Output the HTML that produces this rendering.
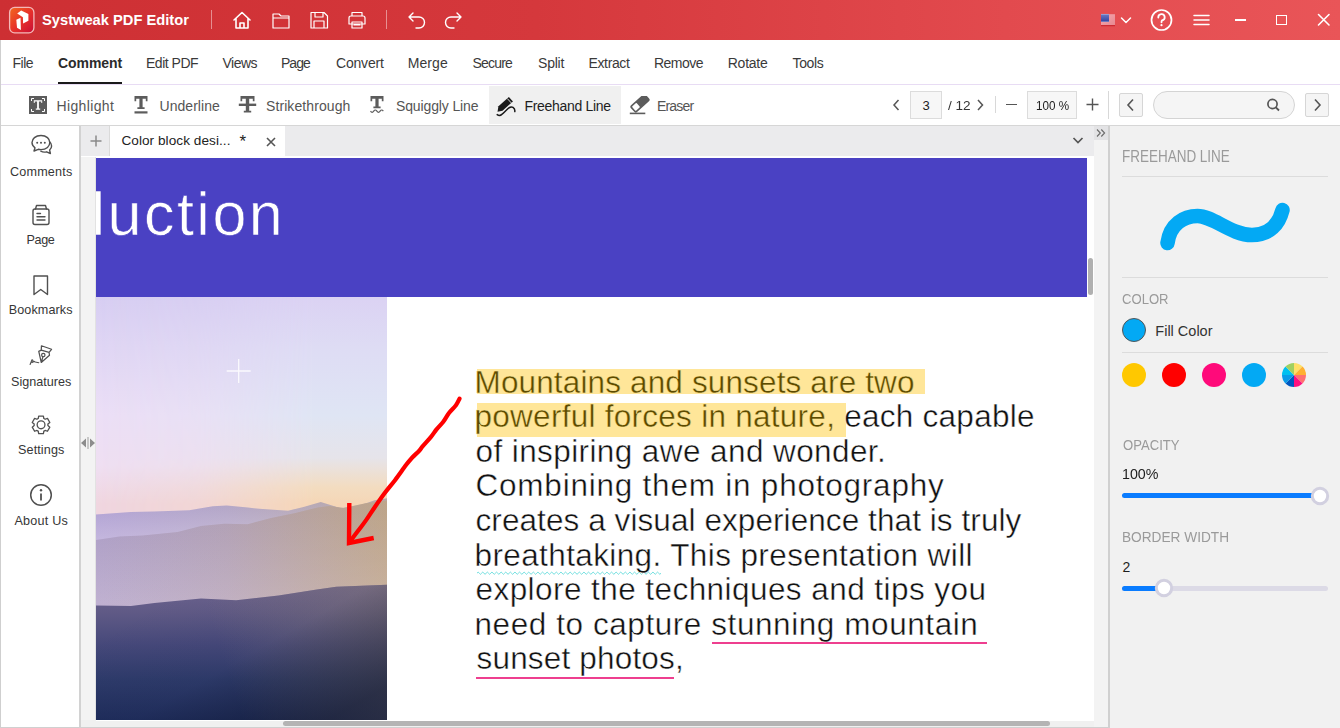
<!DOCTYPE html><html><head><meta charset="utf-8"><style>
html,body{margin:0;padding:0;}
body{width:1340px;height:728px;overflow:hidden;position:relative;background:#fff;font-family:"Liberation Sans",sans-serif;}
.t{position:absolute;white-space:pre;}
.r{position:absolute;display:block;}
</style></head><body>
<div class="r" style="left:0px;top:0px;width:1340px;height:40px;background:linear-gradient(90deg,#cd2f33 0%,#d5383c 40%,#e24a4e 75%,#e95558 100%);"></div>
<svg class="r" style="left:8px;top:6px;" width="28" height="28" viewBox="0 0 28 28"><defs><linearGradient id="lg" x1="0" y1="0" x2="1" y2="1"><stop offset="0" stop-color="#f26a1e"/><stop offset="0.5" stop-color="#e8322a"/><stop offset="1" stop-color="#c80c36"/></linearGradient></defs>
<rect x="1.6" y="1.4" width="24.3" height="25.4" rx="5" fill="url(#lg)" stroke="#f4b8b8" stroke-width="1.3"/>
<path d="M9.2 7.45 L13.16 4.6 L20.4 7.9 L20.4 14.7 L15.1 17.6 L14.9 11.2 Z" fill="#fff"/>
<path d="M8.3 13.8 L12.5 11.85 L12.9 23.9 L9 21.7 Z" fill="#fff"/></svg>
<div class="t" style="left:42.00px;top:13.25px;font-size:14.7px;line-height:14.7px;color:#fff;font-weight:700;">Systweak PDF Editor</div>
<div class="r" style="left:211px;top:10px;width:1px;height:19px;background:rgba(255,255,255,0.45);"></div>
<div class="r" style="left:386px;top:10px;width:1px;height:19px;background:rgba(255,255,255,0.45);"></div>
<svg class="r" style="left:231px;top:10px;" width="22" height="20" viewBox="0 0 22 20"><path stroke="#fff" fill="none" stroke-linejoin="round" stroke-linecap="round" stroke-width="1.6" d="M3 10 L11 2.5 L19 10 M5 8.5 V18 H17 V8.5 M9 18 V13 H13 V18"/></svg>
<svg class="r" style="left:270px;top:10px;" width="22" height="20" viewBox="0 0 22 20"><path stroke="#fff" fill="none" stroke-linejoin="round" stroke-linecap="round" stroke-width="1.2" d="M3 4 H9 L11 6 H19 V18 H3 Z M3 8 H19"/></svg>
<svg class="r" style="left:308px;top:10px;" width="22" height="20" viewBox="0 0 22 20"><path stroke="#fff" fill="none" stroke-linejoin="round" stroke-linecap="round" stroke-width="1.2" d="M3 2.5 H16 L19.5 6 V18 H3 Z M7 2.5 V7 H15 V2.5 M6 18 V11 H16 V18"/></svg>
<svg class="r" style="left:346px;top:10px;" width="22" height="20" viewBox="0 0 22 20"><path stroke="#fff" fill="none" stroke-linejoin="round" stroke-linecap="round" stroke-width="1.2" d="M6 6 V2.5 H16 V6 M3 8 Q3 6 5 6 H17 Q19 6 19 8 V14 H3 Z M6 12 H16 V18 H6 Z M8 15 H14"/></svg>
<svg class="r" style="left:405px;top:10px;" width="22" height="20" viewBox="0 0 22 20"><path stroke="#fff" fill="none" stroke-linejoin="round" stroke-linecap="round" stroke-width="1.4" d="M4 7 H14 A5.5 5.5 0 0 1 14 18 H11 M8 3 L4 7 L8 11"/></svg>
<svg class="r" style="left:443px;top:10px;" width="22" height="20" viewBox="0 0 22 20"><path stroke="#fff" fill="none" stroke-linejoin="round" stroke-linecap="round" stroke-width="1.4" d="M18 7 H8 A5.5 5.5 0 0 0 8 18 H11 M14 3 L18 7 L14 11"/></svg>
<svg class="r" style="left:1100px;top:13px;" width="16" height="14" viewBox="0 0 16 14"><defs><linearGradient id="fc" x1="0" y1="0" x2="0" y2="1"><stop offset="0" stop-color="#6e7cc4"/><stop offset="1" stop-color="#3040a0"/></linearGradient><linearGradient id="fs" x1="0" y1="0" x2="1" y2="1"><stop offset="0" stop-color="#f4a8b0"/><stop offset="1" stop-color="#e88890"/></linearGradient></defs><rect x="1" y="1.2" width="14" height="11" fill="url(#fs)"/><rect x="1" y="1" width="8" height="8" fill="url(#fc)"/><path d="M1.5 1.4 H8.5 M1.5 8.6 H8.5" stroke="#e8ecff" stroke-width="0.7" stroke-dasharray="1 1"/><rect x="1" y="12.2" width="14" height="1" fill="#c8202a"/></svg>
<svg class="r" style="left:1119px;top:15px;" width="14" height="10" viewBox="0 0 14 10"><path stroke="#fff" fill="none" stroke-linejoin="round" stroke-linecap="round" stroke-width="1.5" d="M2.5 3 L7 7.5 L11.5 3"/></svg>
<svg class="r" style="left:1149px;top:8px;" width="26" height="24" viewBox="0 0 26 24"><circle cx="12.5" cy="12" r="10" stroke="#fff" fill="none" stroke-linejoin="round" stroke-linecap="round" stroke-width="1.7"/><path stroke="#fff" fill="none" stroke-linejoin="round" stroke-linecap="round" stroke-width="1.8" d="M9.3 9.5 A3.2 3.2 0 1 1 13 12.5 Q12.5 13 12.5 14.3"/><circle cx="12.5" cy="17.2" r="1.1" fill="#fff"/></svg>
<svg class="r" style="left:1192px;top:13px;" width="20" height="14" viewBox="0 0 20 14"><path stroke="#fff" fill="none" stroke-linejoin="round" stroke-linecap="round" stroke-width="1.5" d="M2 2.5 H17 M2 7 H17 M2 11.5 H17"/></svg>
<div class="r" style="left:1235px;top:19px;width:11px;height:2px;background:#fff;"></div>
<div class="r" style="left:1276px;top:15px;width:11px;height:10px;background:transparent;border:1.8px solid #fff;box-sizing:border-box;"></div>
<svg class="r" style="left:1316px;top:13px;" width="16" height="14" viewBox="0 0 16 14"><path stroke="#fff" fill="none" stroke-linejoin="round" stroke-linecap="round" stroke-width="1.6" d="M2.5 1.5 L13 12 M13 1.5 L2.5 12"/></svg>
<div class="r" style="left:0px;top:40px;width:1px;height:688px;background:#cfcfcf;"></div>
<div class="r" style="left:1px;top:84px;width:1339px;height:1px;background:#e8dcf4;"></div>
<div class="t" style="left:12.50px;top:56.15px;font-size:14px;line-height:14px;color:#3a3a3a;font-weight:400;letter-spacing:-0.507px;">File</div>
<div class="t" style="left:58.00px;top:56.15px;font-size:14px;line-height:14px;color:#2b2b2b;font-weight:700;letter-spacing:-0.066px;">Comment</div>
<div class="t" style="left:146.00px;top:56.15px;font-size:14px;line-height:14px;color:#3a3a3a;font-weight:400;letter-spacing:-0.495px;">Edit PDF</div>
<div class="t" style="left:222.50px;top:56.15px;font-size:14px;line-height:14px;color:#3a3a3a;font-weight:400;letter-spacing:-0.523px;">Views</div>
<div class="t" style="left:281.00px;top:56.15px;font-size:14px;line-height:14px;color:#3a3a3a;font-weight:400;letter-spacing:-0.970px;">Page</div>
<div class="t" style="left:336.00px;top:56.15px;font-size:14px;line-height:14px;color:#3a3a3a;font-weight:400;letter-spacing:-0.188px;">Convert</div>
<div class="t" style="left:407.75px;top:56.15px;font-size:14px;line-height:14px;color:#3a3a3a;font-weight:400;letter-spacing:0.088px;">Merge</div>
<div class="t" style="left:472.50px;top:56.15px;font-size:14px;line-height:14px;color:#3a3a3a;font-weight:400;letter-spacing:-0.814px;">Secure</div>
<div class="t" style="left:538.00px;top:56.15px;font-size:14px;line-height:14px;color:#3a3a3a;font-weight:400;letter-spacing:-0.211px;">Split</div>
<div class="t" style="left:588.50px;top:56.15px;font-size:14px;line-height:14px;color:#3a3a3a;font-weight:400;letter-spacing:-0.363px;">Extract</div>
<div class="t" style="left:654.00px;top:56.15px;font-size:14px;line-height:14px;color:#3a3a3a;font-weight:400;letter-spacing:-0.519px;">Remove</div>
<div class="t" style="left:727.75px;top:56.15px;font-size:14px;line-height:14px;color:#3a3a3a;font-weight:400;letter-spacing:-0.242px;">Rotate</div>
<div class="t" style="left:792.50px;top:56.15px;font-size:14px;line-height:14px;color:#3a3a3a;font-weight:400;letter-spacing:-0.358px;">Tools</div>
<div class="r" style="left:58px;top:82px;width:64px;height:2px;background:#1a1a1a;"></div>
<div class="r" style="left:1px;top:125px;width:1339px;height:1px;background:#d6d6d6;"></div>
<div class="r" style="left:489px;top:86px;width:132px;height:38px;background:#f0f0f0;"></div>
<svg class="r" style="left:29px;top:96px;" width="18" height="18" viewBox="0 0 18 18"><rect x="0" y="0" width="18" height="18" fill="#5c5c5c"/><path d="M2.5 5 V2.5 H5 M13 2.5 H15.5 V5 M15.5 13 V15.5 H13 M5 15.5 H2.5 V13" stroke="#fff" stroke-width="1" fill="none"/><path d="M4.8 4.3 H13.2 V7 H12.3 V5.6 H9.9 V12.6 H11.2 V13.7 H6.8 V12.6 H8.1 V5.6 H5.7 V7 H4.8 Z" fill="#fff"/></svg>
<svg class="r" style="left:133px;top:95px;" width="16" height="20" viewBox="0 0 16 20"><path d="M1.5 1 H14.5 V6.3 H12.8 V3.8 H9.6 V12.2 H11.6 V14 H4.4 V12.2 H6.4 V3.8 H3.2 V6.3 H1.5 Z" fill="#5c5c5c"/><rect x="1.5" y="16.3" width="13" height="2.2" fill="#5c5c5c"/></svg>
<svg class="r" style="left:238px;top:95px;" width="19" height="20" viewBox="0 0 19 20"><path d="M2.5 1 H16.5 V6.3 H14.8 V3.8 H11.2 V15.7 H13.2 V17.6 H5.8 V15.7 H7.8 V3.8 H4.2 V6.3 H2.5 Z" fill="#5c5c5c"/><rect x="0.8" y="8.6" width="17.4" height="2.4" fill="#5c5c5c"/></svg>
<svg class="r" style="left:369px;top:95px;" width="16" height="20" viewBox="0 0 16 20"><path d="M1.5 1 H14.5 V6.3 H12.8 V3.8 H9.6 V11.5 H11.6 V13.3 H4.4 V11.5 H6.4 V3.8 H3.2 V6.3 H1.5 Z" fill="#5c5c5c"/><path d="M1.5 16.2 q1.6 2.4 3.2 0 t3.2 0 t3.2 0 t3.2 0" stroke="#5c5c5c" stroke-width="1.2" fill="none"/></svg>
<svg class="r" style="left:495px;top:95.5px;" width="22" height="22" viewBox="0 0 22 22"><path d="M2.5 15.8 L3.46 10.3 L13.86 1.0 L17.94 5.4 L7.54 14.7 Z" fill="#1a1a1a"/><path d="M12.3 2.6 L16.4 7" stroke="#f0f0f0" stroke-width="0.9"/><path d="M2.2 18.6 Q5 20.8 8.5 17 L12.3 13.2 Q15.8 9.8 18 11.4 Q20.2 13 19.8 15.6" stroke="#1a1a1a" stroke-width="1.5" fill="none" stroke-linecap="round"/></svg>
<svg class="r" style="left:629px;top:95.5px;" width="22" height="22" viewBox="0 0 22 22"><g transform="translate(0.5 -2.2) rotate(-42 10.5 9.5)"><rect x="0.5" y="5" width="20" height="9" rx="2" fill="#5c5c5c"/><rect x="2.1" y="6.6" width="6" height="5.8" rx="0.8" fill="#fff"/></g><rect x="0.8" y="16.6" width="15.5" height="1.6" fill="#5c5c5c"/></svg>
<div class="t" style="left:56.50px;top:99.40px;font-size:14px;line-height:14px;color:#555;font-weight:400;letter-spacing:0.364px;">Highlight</div>
<div class="t" style="left:159.50px;top:99.40px;font-size:14px;line-height:14px;color:#555;font-weight:400;letter-spacing:0.045px;">Underline</div>
<div class="t" style="left:266.00px;top:99.40px;font-size:14px;line-height:14px;color:#555;font-weight:400;letter-spacing:0.085px;">Strikethrough</div>
<div class="t" style="left:396.00px;top:99.40px;font-size:14px;line-height:14px;color:#555;font-weight:400;letter-spacing:-0.127px;">Squiggly Line</div>
<div class="t" style="left:524.50px;top:99.40px;font-size:14px;line-height:14px;color:#1e1e1e;font-weight:400;letter-spacing:-0.313px;">Freehand Line</div>
<div class="t" style="left:657.00px;top:99.40px;font-size:14px;line-height:14px;color:#555;font-weight:400;letter-spacing:-0.814px;">Eraser</div>
<svg class="r" style="left:890px;top:97px;" width="12" height="16" viewBox="0 0 12 16"><path d="M8.5 3 L4 8 L8.5 13" stroke="#555" stroke-width="1.5" fill="none"/></svg>
<div class="r" style="left:910px;top:91px;width:32px;height:28px;background:#f7f7f7;border:1px solid #dcdcdc;box-sizing:border-box;"></div>
<div class="t" style="left:922.50px;top:99.49px;font-size:13px;line-height:13px;color:#222;font-weight:400;">3</div>
<div class="t" style="left:947.50px;top:99.49px;font-size:13px;line-height:13px;color:#333;font-weight:400;transform:scaleX(1.0441);transform-origin:0 0;">/ 12</div>
<svg class="r" style="left:974px;top:97px;" width="12" height="16" viewBox="0 0 12 16"><path d="M4 3 L8.5 8 L4 13" stroke="#555" stroke-width="1.5" fill="none"/></svg>
<div class="r" style="left:995px;top:96px;width:1px;height:17px;background:#d8d8d8;"></div>
<div class="r" style="left:1006px;top:104px;width:11px;height:1.4px;background:#555;"></div>
<div class="r" style="left:1027px;top:91px;width:50px;height:28px;background:#f7f7f7;border:1px solid #dcdcdc;box-sizing:border-box;"></div>
<div class="t" style="left:1035.50px;top:99.49px;font-size:13px;line-height:13px;color:#222;font-weight:400;transform:scaleX(0.8981);transform-origin:0 0;">100 %</div>
<svg class="r" style="left:1085px;top:97px;" width="15" height="15" viewBox="0 0 15 15"><path d="M1.5 7.5 H13.5 M7.5 1.5 V13.5" stroke="#555" stroke-width="1.4" fill="none"/></svg>
<div class="r" style="left:1108px;top:91px;width:1px;height:28px;background:#d8d8d8;"></div>
<div class="r" style="left:1119px;top:93px;width:24px;height:24px;background:#f5f5f5;border:1px solid #d6d6d6;box-sizing:border-box;border-radius:2px;"></div>
<svg class="r" style="left:1119px;top:93px;" width="24" height="24" viewBox="0 0 24 24"><path d="M14 6.5 L9 12 L14 17.5" stroke="#555" stroke-width="1.6" fill="none"/></svg>
<div class="r" style="left:1153px;top:91px;width:142px;height:28px;background:#f5f5f5;border:1px solid #d4d4d4;box-sizing:border-box;border-radius:14px;"></div>
<svg class="r" style="left:1265px;top:96px;" width="18" height="18" viewBox="0 0 18 18"><circle cx="7.5" cy="8" r="4.6" stroke="#555" stroke-width="1.7" fill="none"/><path d="M10.8 11.3 L14 14.5" stroke="#555" stroke-width="1.9"/></svg>
<div class="r" style="left:1305px;top:93px;width:24px;height:24px;background:#f5f5f5;border:1px solid #d6d6d6;box-sizing:border-box;border-radius:2px;"></div>
<svg class="r" style="left:1305px;top:93px;" width="24" height="24" viewBox="0 0 24 24"><path d="M10 6.5 L15 12 L10 17.5" stroke="#555" stroke-width="1.6" fill="none"/></svg>
<div class="r" style="left:79px;top:126px;width:2px;height:602px;background:#d2d2d2;"></div>
<svg class="r" style="left:30px;top:133px;" width="23" height="24" viewBox="0 0 23 24"><path stroke="#505050" fill="none" stroke-linejoin="round" stroke-linecap="round" stroke-width="1.4" d="M11 2.5 C5.5 2.5 2 5.8 2 9.6 C2 11.8 3.2 13.6 5 14.8 L4 18 L8.3 16.3 C9.2 16.5 10.1 16.6 11 16.6 C16.5 16.6 19.8 13.3 19.8 9.6 C19.8 5.8 16.5 2.5 11 2.5 Z"/><path stroke="#505050" fill="none" stroke-linejoin="round" stroke-linecap="round" stroke-width="1.4" d="M19.6 8.8 C21 10 21.6 11.4 21.6 13 C21.6 14.6 20.8 16 19.6 17 L20.4 20.5 L16.6 18.8 C14.8 19.3 12.6 19.2 10.8 18.2"/><circle cx="7.2" cy="9.7" r="1" fill="#505050"/><circle cx="11" cy="9.7" r="1" fill="#505050"/><circle cx="14.8" cy="9.7" r="1" fill="#505050"/></svg>
<svg class="r" style="left:31px;top:203px;" width="20" height="24" viewBox="0 0 20 24"><rect x="2" y="6" width="16" height="15.5" rx="2" stroke="#505050" fill="none" stroke-linejoin="round" stroke-linecap="round" stroke-width="1.4"/><path stroke="#505050" fill="none" stroke-linejoin="round" stroke-linecap="round" stroke-width="1.4" d="M4.5 6 L5.5 2.5 H14.5 L15.5 6"/><path stroke="#505050" fill="none" stroke-linejoin="round" stroke-linecap="round" stroke-width="1.4" d="M6 10.5 H9.5 M6 13.8 H14 M6 17 H14"/></svg>
<svg class="r" style="left:32px;top:274px;" width="18" height="23" viewBox="0 0 18 23"><path stroke="#505050" fill="none" stroke-linejoin="round" stroke-linecap="round" stroke-width="1.4" d="M2 2 H15.5 V20.5 L8.75 15.5 L2 20.5 Z" stroke-width="1.5"/></svg>
<svg class="r" style="left:29px;top:344px;" width="24" height="22" viewBox="0 0 24 22"><path stroke="#505050" fill="none" stroke-linejoin="round" stroke-linecap="round" stroke-width="1.25" d="M12.45 1.77 L22.55 5.27 L20.07 8.36 L12.25 6.1 Z M12.25 6.1 L9.77 7.33 L12.25 18.46 L20.49 11.25 L20.07 8.36 M13.9 12.9 L12.25 18.3"/><circle cx="14.3" cy="11.04" r="1.7" stroke="#505050" fill="none" stroke-linejoin="round" stroke-linecap="round" stroke-width="1.2"/><path stroke="#505050" fill="none" stroke-linejoin="round" stroke-linecap="round" stroke-width="1.1" d="M1.1 20.5 L3 15.8 Q4.5 16 3.8 17.6 L3 18.6 L5.2 17.4 L6.3 18 L9.8 18.7"/></svg>
<svg class="r" style="left:30px;top:414px;" width="22" height="22" viewBox="0 0 22 22"><path stroke="#505050" fill="none" stroke-linejoin="round" stroke-linecap="round" stroke-width="1.3" d="M8.23 4.53 L8.68 2.04 L13.40 2.04 L13.85 4.53 A6.9 6.9 0 0 1 15.10 5.25 L15.10 5.25 L17.47 4.40 L19.83 8.47 L17.90 10.11 A6.9 6.9 0 0 1 17.90 11.55 L17.90 11.55 L19.83 13.19 L17.47 17.26 L15.10 16.41 A6.9 6.9 0 0 1 13.85 17.13 L13.85 17.13 L13.40 19.62 L8.68 19.62 L8.23 17.13 A6.9 6.9 0 0 1 6.98 16.41 L6.98 16.41 L4.61 17.26 L2.25 13.19 L4.18 11.55 A6.9 6.9 0 0 1 4.18 10.11 L4.18 10.11 L2.25 8.47 L4.61 4.40 L6.98 5.25 A6.9 6.9 0 0 1 8.23 4.53 Z"/><circle cx="11.04" cy="10.83" r="3.9" stroke="#505050" fill="none" stroke-linejoin="round" stroke-linecap="round" stroke-width="1.3"/></svg>
<svg class="r" style="left:29px;top:483px;" width="24" height="24" viewBox="0 0 24 24"><circle cx="12" cy="12" r="10.3" stroke="#505050" fill="none" stroke-linejoin="round" stroke-linecap="round" stroke-width="1.5"/><path d="M12 10.5 V17.5" stroke="#505050" stroke-width="1.8"/><circle cx="12" cy="7.2" r="1.2" fill="#505050"/></svg>
<div class="t" style="left:10.00px;top:166.13px;font-size:12.6px;line-height:12.6px;color:#363636;font-weight:400;letter-spacing:0.188px;">Comments</div>
<div class="t" style="left:26.50px;top:233.88px;font-size:12.6px;line-height:12.6px;color:#363636;font-weight:400;letter-spacing:-0.386px;">Page</div>
<div class="t" style="left:8.75px;top:303.63px;font-size:12.6px;line-height:12.6px;color:#363636;font-weight:400;letter-spacing:0.101px;">Bookmarks</div>
<div class="t" style="left:11.00px;top:375.73px;font-size:12.6px;line-height:12.6px;color:#363636;font-weight:400;letter-spacing:0.010px;">Signatures</div>
<div class="t" style="left:18.00px;top:443.63px;font-size:12.6px;line-height:12.6px;color:#363636;font-weight:400;letter-spacing:0.113px;">Settings</div>
<div class="t" style="left:14.40px;top:514.88px;font-size:12.6px;line-height:12.6px;color:#363636;font-weight:400;letter-spacing:0.228px;">About Us</div>
<div class="r" style="left:81px;top:126px;width:1013px;height:30px;background:#ebebed;"></div>
<div class="r" style="left:109px;top:126px;width:1px;height:30px;background:#dadada;"></div>
<div class="r" style="left:110px;top:126px;width:175px;height:30px;background:#fff;"></div>
<svg class="r" style="left:88px;top:133px;" width="16" height="16" viewBox="0 0 16 16"><path d="M8 2.5 V13.5 M2.5 8 H13.5" stroke="#8a8a8a" stroke-width="1.5" fill="none"/></svg>
<div class="t" style="left:121.40px;top:134.48px;font-size:13.6px;line-height:13.6px;color:#222;font-weight:400;letter-spacing:0.058px;">Color block desi...</div>
<div class="t" style="left:239.50px;top:133.11px;font-size:17px;line-height:17px;color:#222;font-weight:400;">*</div>
<svg class="r" style="left:264px;top:135px;" width="14" height="14" viewBox="0 0 14 14"><path d="M3 3 L11 11 M11 3 L3 11" stroke="#555" stroke-width="1.6" fill="none"/></svg>
<svg class="r" style="left:1070px;top:133px;" width="16" height="14" viewBox="0 0 16 14"><path d="M3.5 5 L8 9.5 L12.5 5" stroke="#555" stroke-width="1.7" fill="none"/></svg>
<div class="r" style="left:81px;top:156px;width:1013px;height:1px;background:#ffffff;"></div>
<div class="r" style="left:1094px;top:126px;width:14px;height:14px;background:#e3e3e5;"></div>
<svg class="r" style="left:1094px;top:126px;" width="14" height="14" viewBox="0 0 14 14"><path d="M3 3.5 L6.3 7 L3 10.5 M7.3 3.5 L10.6 7 L7.3 10.5" stroke="#6a6a6a" stroke-width="1.1" fill="none"/></svg>
<div class="r" style="left:81px;top:157px;width:14px;height:563px;background:#f3f3f3;"></div>
<div class="r" style="left:95px;top:157px;width:1px;height:563px;background:#e2e2e2;"></div>
<div class="r" style="left:96px;top:157px;width:998px;height:563px;background:#ffffff;"></div>
<div class="r" style="left:1094px;top:140px;width:14px;height:588px;background:#f3f3f3;"></div>
<div class="r" style="left:1108px;top:126px;width:2px;height:602px;background:#d0d0d0;"></div>
<div class="r" style="left:96px;top:158px;width:991px;height:139px;background:#4a41c3;"></div>
<div class="r" style="left:96px;top:158px;width:991px;height:139px;overflow:hidden;">
<div class="t" style="left:-4.50px;top:25.85px;font-size:61px;line-height:61px;color:#fff;font-weight:400;letter-spacing:2.483px;-webkit-text-stroke:0.6px #4a41c3;">luction</div>
</div>
<div class="r" style="left:1088px;top:258px;width:5px;height:37px;background:#b0b0b0;border-radius:3px;"></div>
<svg class="r" style="left:80px;top:436px;" width="16" height="14" viewBox="0 0 16 14"><path d="M6 2.5 V11.5 L1 7 Z" fill="#8c8c8c"/><rect x="7" y="1" width="2" height="12" fill="#c8c8c8"/><path d="M10 2.5 V11.5 L15 7 Z" fill="#8c8c8c"/></svg>
<div class="r" style="left:81px;top:720px;width:1013px;height:7px;background:#f0f0f0;"></div>
<div class="r" style="left:96px;top:720px;width:998px;height:1px;background:#fff;"></div>
<div class="r" style="left:283px;top:721px;width:767px;height:5px;background:#b4b4b4;border-radius:3px;"></div>
<div class="r" style="left:0px;top:727px;width:1110px;height:1px;background:#d0d0d0;"></div>
<div class="r" style="left:1110px;top:126px;width:230px;height:602px;background:#f1f1f1;"></div>
<div class="t" style="left:1121.54px;top:148.79px;font-size:15.6px;line-height:15.6px;color:#9a9a9a;font-weight:400;transform:scaleX(0.8641);transform-origin:0 0;">FREEHAND LINE</div>
<div class="r" style="left:1122px;top:176px;width:206px;height:1px;background:#dcdcdc;"></div>
<svg class="r" style="left:1110px;top:176px;" width="230" height="100" viewBox="0 0 230 100"><path d="M57.5 67 C60 48 74 40 87.5 40 C103 40 121 59 142 59 C160 59 169 48 172.5 34" stroke="#03a9f4" stroke-width="14.5" fill="none" stroke-linecap="round"/></svg>
<div class="r" style="left:1122px;top:277px;width:206px;height:1px;background:#dcdcdc;"></div>
<div class="t" style="left:1122.00px;top:291.30px;font-size:15px;line-height:15px;color:#9a9a9a;font-weight:400;transform:scaleX(0.8727);transform-origin:0 0;">COLOR</div>
<svg class="r" style="left:1121px;top:317px;" width="26" height="26" viewBox="0 0 26 26"><circle cx="13" cy="13" r="11.5" fill="#03a9f4" stroke="#555" stroke-width="1"/></svg>
<div class="t" style="left:1155.30px;top:323.52px;font-size:14.5px;line-height:14.5px;color:#333;font-weight:400;">Fill Color</div>
<div class="r" style="left:1122px;top:352px;width:206px;height:1px;background:#dcdcdc;"></div>
<svg class="r" style="left:1122px;top:363px;" width="24" height="24" viewBox="0 0 24 24"><circle cx="12" cy="12" r="12" fill="#ffc800"/></svg>
<svg class="r" style="left:1162px;top:363px;" width="24" height="24" viewBox="0 0 24 24"><circle cx="12" cy="12" r="12" fill="#ff0000"/></svg>
<svg class="r" style="left:1202px;top:363px;" width="24" height="24" viewBox="0 0 24 24"><circle cx="12" cy="12" r="12" fill="#ff0a7a"/></svg>
<svg class="r" style="left:1242px;top:363px;" width="24" height="24" viewBox="0 0 24 24"><circle cx="12" cy="12" r="12" fill="#03a9f4"/></svg>
<svg class="r" style="left:1282px;top:363px;" width="24" height="24" viewBox="0 0 24 24"><path d="M12 12 L12.00 0.00 A12 12 0 0 1 20.49 3.51 Z" fill="#ffe066"/><path d="M12 12 L20.49 3.51 A12 12 0 0 1 24.00 12.00 Z" fill="#ffb030"/><path d="M12 12 L24.00 12.00 A12 12 0 0 1 20.49 20.49 Z" fill="#ff7070"/><path d="M12 12 L20.49 20.49 A12 12 0 0 1 12.00 24.00 Z" fill="#ff1080"/><path d="M12 12 L12.00 24.00 A12 12 0 0 1 3.51 20.49 Z" fill="#0058c0"/><path d="M12 12 L3.51 20.49 A12 12 0 0 1 0.00 12.00 Z" fill="#0a9be8"/><path d="M12 12 L0.00 12.00 A12 12 0 0 1 3.51 3.51 Z" fill="#00c0f0"/><path d="M12 12 L3.51 3.51 A12 12 0 0 1 12.00 0.00 Z" fill="#a0d060"/></svg>
<div class="t" style="left:1122.50px;top:436.50px;font-size:15px;line-height:15px;color:#9a9a9a;font-weight:400;transform:scaleX(0.8729);transform-origin:0 0;">OPACITY</div>
<div class="t" style="left:1121.57px;top:466.46px;font-size:15.4px;line-height:15.4px;color:#1e1e1e;font-weight:400;transform:scaleX(0.9256);transform-origin:0 0;">100%</div>
<div class="r" style="left:1122px;top:493px;width:198px;height:5px;background:#0a7cff;border-radius:3px;"></div>
<svg class="r" style="left:1310px;top:486px;" width="20" height="20" viewBox="0 0 20 20"><circle cx="10" cy="10" r="7.7" fill="#fff" stroke="#d2d0e0" stroke-width="3"/></svg>
<div class="t" style="left:1121.58px;top:529.67px;font-size:14.8px;line-height:14.8px;color:#9a9a9a;font-weight:400;transform:scaleX(0.9237);transform-origin:0 0;">BORDER WIDTH</div>
<div class="t" style="left:1122.50px;top:560.35px;font-size:14px;line-height:14px;color:#1e1e1e;font-weight:400;">2</div>
<div class="r" style="left:1122px;top:586px;width:206px;height:5px;background:#dcdae6;border-radius:3px;"></div>
<div class="r" style="left:1122px;top:586px;width:42px;height:5px;background:#0a7cff;border-radius:3px 0 0 3px;"></div>
<svg class="r" style="left:1154px;top:578px;" width="20" height="20" viewBox="0 0 20 20"><circle cx="10" cy="10" r="7.7" fill="#fff" stroke="#d2d0e0" stroke-width="3"/></svg>
<svg class="r" style="left:96px;top:297px;" width="291" height="423" viewBox="0 0 291 423"><defs>
<linearGradient id="skyL" x1="0" y1="0" x2="0" y2="423" gradientUnits="userSpaceOnUse">
 <stop offset="0" stop-color="#d7cef2"/>
 <stop offset="0.12" stop-color="#e0d6f4"/>
 <stop offset="0.28" stop-color="#ecdff6"/>
 <stop offset="0.40" stop-color="#efdff2"/>
 <stop offset="0.49" stop-color="#f0d6e0"/>
</linearGradient>
<linearGradient id="skyR" x1="0" y1="0" x2="0" y2="423" gradientUnits="userSpaceOnUse">
 <stop offset="0" stop-color="#dbd2f3"/>
 <stop offset="0.12" stop-color="#dedcf4"/>
 <stop offset="0.28" stop-color="#dfe5f4"/>
 <stop offset="0.38" stop-color="#e6e4ea"/>
 <stop offset="0.45" stop-color="#f3dcc0"/>
 <stop offset="0.49" stop-color="#f5d6b6"/>
</linearGradient>
<linearGradient id="hmask" x1="0" y1="0" x2="1" y2="0">
 <stop offset="0" stop-color="#fff" stop-opacity="0"/>
 <stop offset="0.35" stop-color="#fff" stop-opacity="0.25"/>
 <stop offset="0.75" stop-color="#fff" stop-opacity="1"/>
 <stop offset="1" stop-color="#fff" stop-opacity="1"/>
</linearGradient>
<mask id="mk" maskContentUnits="userSpaceOnUse"><rect x="0" y="0" width="291" height="423" fill="url(#hmask)"/></mask>
<linearGradient id="m1" x1="0" y1="0" x2="1" y2="0">
 <stop offset="0" stop-color="#ae9fd2"/>
 <stop offset="0.45" stop-color="#b2a5c6"/>
 <stop offset="0.75" stop-color="#b6a8b4"/>
 <stop offset="1" stop-color="#b8a8a8"/>
</linearGradient>
<linearGradient id="m2" x1="0" y1="0" x2="1" y2="0">
 <stop offset="0" stop-color="#aa9bc4"/>
 <stop offset="0.45" stop-color="#ae9eb6"/>
 <stop offset="1" stop-color="#b8a48c"/>
</linearGradient>
<linearGradient id="haze" x1="0" y1="0" x2="1" y2="0">
 <stop offset="0" stop-color="#b4a4c4" stop-opacity="0"/>
 <stop offset="1" stop-color="#c8a888" stop-opacity="0.35"/>
</linearGradient>
<linearGradient id="m3" x1="0" y1="0" x2="0" y2="1">
 <stop offset="0" stop-color="#6e6490"/>
 <stop offset="0.2" stop-color="#605a86"/>
 <stop offset="0.45" stop-color="#45487a"/>
 <stop offset="0.7" stop-color="#2e3b6b"/>
 <stop offset="1" stop-color="#1f2d5c"/>
</linearGradient>
<linearGradient id="m3h" x1="0.2" y1="0.1" x2="1" y2="0.75">
 <stop offset="0" stop-color="#0e1428" stop-opacity="0"/>
 <stop offset="0.5" stop-color="#0e1428" stop-opacity="0.05"/>
 <stop offset="1" stop-color="#0e1428" stop-opacity="0.55"/>
</linearGradient>
<linearGradient id="f1" x1="0" y1="205" x2="0" y2="250" gradientUnits="userSpaceOnUse">
 <stop offset="0" stop-color="#efe4f6" stop-opacity="0"/>
 <stop offset="1" stop-color="#efe4f6" stop-opacity="0.4"/>
</linearGradient>
<linearGradient id="f2" x1="0" y1="215" x2="0" y2="305" gradientUnits="userSpaceOnUse">
 <stop offset="0" stop-color="#f0e2ee" stop-opacity="0"/>
 <stop offset="1" stop-color="#f0e2ee" stop-opacity="0.3"/>
</linearGradient>
<linearGradient id="m3t" x1="120" y1="340" x2="291" y2="285" gradientUnits="userSpaceOnUse">
 <stop offset="0" stop-color="#8a7c76" stop-opacity="0"/>
 <stop offset="1" stop-color="#8a7c76" stop-opacity="0.5"/>
</linearGradient>
</defs>
<rect x="0" y="0" width="291" height="423" fill="url(#skyL)"/>
<rect x="0" y="0" width="291" height="423" fill="url(#skyR)" mask="url(#mk)"/>
<polygon points="0.0,217.4 35.0,215.0 58.4,214.6 93.4,213.2 116.8,209.2 130.8,208.5 151.8,210.4 163.2,211.8 192.0,213.8 207.5,209.9 224.8,205.1 244.0,210.9 259.4,209.9 278.6,203.2 291.0,201.3 291,423 0,423" fill="url(#m1)"/><polygon points="0.0,217.4 35.0,215.0 58.4,214.6 93.4,213.2 116.8,209.2 130.8,208.5 151.8,210.4 163.2,211.8 192.0,213.8 207.5,209.9 224.8,205.1 244.0,210.9 259.4,209.9 278.6,203.2 291.0,201.3 291,423 0,423" fill="url(#f1)"/><polygon points="0.0,243.0 23.4,239.6 46.7,238.4 81.7,234.9 105.0,229.0 128.4,226.7 151.8,227.2 175.2,220.9 198.5,216.2 221.9,210.4 233.5,209.0 247.5,211.0 268.6,206.5 291.0,203.5 291,423 0,423" fill="url(#m2)"/><polygon points="0.0,243.0 23.4,239.6 46.7,238.4 81.7,234.9 105.0,229.0 128.4,226.7 151.8,227.2 175.2,220.9 198.5,216.2 221.9,210.4 233.5,209.0 247.5,211.0 268.6,206.5 291.0,203.5 291,423 0,423" fill="url(#f2)"/><polygon points="0.0,243.0 23.4,239.6 46.7,238.4 81.7,234.9 105.0,229.0 128.4,226.7 151.8,227.2 175.2,220.9 198.5,216.2 221.9,210.4 233.5,209.0 247.5,211.0 268.6,206.5 291.0,203.5 291,423 0,423" fill="url(#haze)"/><polygon points="0.0,308.5 35.0,308.9 58.4,306.1 105.0,301.4 140.1,303.3 182.5,298.4 220.9,292.6 240.2,289.7 291.0,287.8 291,423 0,423" fill="url(#m3)"/><polygon points="0.0,308.5 35.0,308.9 58.4,306.1 105.0,301.4 140.1,303.3 182.5,298.4 220.9,292.6 240.2,289.7 291.0,287.8 291,423 0,423" fill="url(#m3t)"/><polygon points="0.0,308.5 35.0,308.9 58.4,306.1 105.0,301.4 140.1,303.3 182.5,298.4 220.9,292.6 240.2,289.7 291.0,287.8 291,423 0,423" fill="url(#m3h)"/><path d="M142.7 62 V86 M130.7 74 H154.7" stroke="#fff" stroke-opacity="0.85" stroke-width="1.3"/></svg>
<div class="r" style="left:476.7px;top:368.6px;width:448px;height:25px;background:#ffe699;"></div>
<div class="r" style="left:476.7px;top:402.7px;width:369.3px;height:34px;background:#ffe699;"></div>
<svg class="r" style="left:477px;top:571px;" width="184" height="5" viewBox="0 0 184 5"><path d="M0 2.2 q1.15 -2.2 2.3 0 t2.3 0 q1.15 -2.2 2.3 0 t2.3 0 q1.15 -2.2 2.3 0 t2.3 0 q1.15 -2.2 2.3 0 t2.3 0 q1.15 -2.2 2.3 0 t2.3 0 q1.15 -2.2 2.3 0 t2.3 0 q1.15 -2.2 2.3 0 t2.3 0 q1.15 -2.2 2.3 0 t2.3 0 q1.15 -2.2 2.3 0 t2.3 0 q1.15 -2.2 2.3 0 t2.3 0 q1.15 -2.2 2.3 0 t2.3 0 q1.15 -2.2 2.3 0 t2.3 0 q1.15 -2.2 2.3 0 t2.3 0 q1.15 -2.2 2.3 0 t2.3 0 q1.15 -2.2 2.3 0 t2.3 0 q1.15 -2.2 2.3 0 t2.3 0 q1.15 -2.2 2.3 0 t2.3 0 q1.15 -2.2 2.3 0 t2.3 0 q1.15 -2.2 2.3 0 t2.3 0 q1.15 -2.2 2.3 0 t2.3 0 q1.15 -2.2 2.3 0 t2.3 0 q1.15 -2.2 2.3 0 t2.3 0 q1.15 -2.2 2.3 0 t2.3 0 q1.15 -2.2 2.3 0 t2.3 0 q1.15 -2.2 2.3 0 t2.3 0 q1.15 -2.2 2.3 0 t2.3 0 q1.15 -2.2 2.3 0 t2.3 0 q1.15 -2.2 2.3 0 t2.3 0 q1.15 -2.2 2.3 0 t2.3 0 q1.15 -2.2 2.3 0 t2.3 0 q1.15 -2.2 2.3 0 t2.3 0 q1.15 -2.2 2.3 0 t2.3 0 q1.15 -2.2 2.3 0 t2.3 0 q1.15 -2.2 2.3 0 t2.3 0 q1.15 -2.2 2.3 0 t2.3 0 q1.15 -2.2 2.3 0 t2.3 0 q1.15 -2.2 2.3 0 t2.3 0 q1.15 -2.2 2.3 0 t2.3 0 q1.15 -2.2 2.3 0 t2.3 0 q1.15 -2.2 2.3 0 t2.3 0" stroke="#55d8d8" stroke-width="0.85" fill="none"/></svg>
<div class="r" style="left:712px;top:642.3px;width:275px;height:2px;background:#ee3f8f;"></div>
<div class="r" style="left:476px;top:677.3px;width:198px;height:2px;background:#ee3f8f;"></div>
<div id="doctext">
<div class="t" style="left:474.50px;top:366.83px;font-size:31.5px;line-height:31.5px;color:#5c4a00;font-weight:400;letter-spacing:0.143px;-webkit-text-stroke:0.42px #ffe699;">Mountains and sunsets are two</div>
<div class="t" style="left:474.50px;top:401.37px;font-size:31.5px;line-height:31.5px;color:#111;font-weight:400;letter-spacing:0.268px;-webkit-text-stroke:0.42px #fff;"><span style="color:#5c4a00;-webkit-text-stroke:0.42px #ffe699">powerful forces in nature, </span>each capable</div>
<div class="t" style="left:475.50px;top:435.91px;font-size:31.5px;line-height:31.5px;color:#111;font-weight:400;letter-spacing:0.407px;-webkit-text-stroke:0.42px #fff;">of inspiring awe and wonder.</div>
<div class="t" style="left:475.50px;top:470.45px;font-size:31.5px;line-height:31.5px;color:#111;font-weight:400;letter-spacing:0.776px;-webkit-text-stroke:0.42px #fff;">Combining them in photography</div>
<div class="t" style="left:475.50px;top:504.99px;font-size:31.5px;line-height:31.5px;color:#111;font-weight:400;letter-spacing:0.077px;-webkit-text-stroke:0.42px #fff;">creates a visual experience that is truly</div>
<div class="t" style="left:474.50px;top:539.53px;font-size:31.5px;line-height:31.5px;color:#111;font-weight:400;letter-spacing:0.388px;-webkit-text-stroke:0.42px #fff;">breathtaking. This presentation will</div>
<div class="t" style="left:475.50px;top:574.07px;font-size:31.5px;line-height:31.5px;color:#111;font-weight:400;letter-spacing:0.436px;-webkit-text-stroke:0.42px #fff;">explore the techniques and tips you</div>
<div class="t" style="left:474.50px;top:608.61px;font-size:31.5px;line-height:31.5px;color:#111;font-weight:400;letter-spacing:0.569px;-webkit-text-stroke:0.42px #fff;">need to capture stunning mountain</div>
<div class="t" style="left:476.50px;top:643.15px;font-size:31.5px;line-height:31.5px;color:#111;font-weight:400;letter-spacing:0.182px;-webkit-text-stroke:0.42px #fff;">sunset photos,</div>
</div>
<svg class="r" style="left:330px;top:380px;" width="150" height="180" viewBox="0 0 150 180"><path d="M129.5 18.7 C128.9 19.8 127.6 23.0 125.8 25.4 C124.1 27.8 121.1 30.3 119.0 33.0 C116.9 35.7 115.4 39.0 113.3 41.7 C111.2 44.4 108.6 46.8 106.5 49.4 C104.4 52.0 103.1 54.4 100.8 57.1 C98.6 59.8 95.0 63.5 93.0 65.8 C91.0 68.1 90.8 69.1 89.0 71.0 C87.2 72.9 84.7 75.0 82.5 77.3 C80.3 79.7 78.9 81.3 76.0 85.1 C73.1 88.9 68.7 95.4 65.0 100.2 C61.3 105.0 57.4 109.4 54.0 114.0 C50.6 118.6 47.4 123.3 44.4 127.7 C41.4 132.0 38.9 136.2 36.1 140.1 C33.4 144.0 30.6 147.4 27.9 151.1 C25.1 154.8 21.0 160.3 19.6 162.1 " stroke="#ff0000" stroke-width="4.2" fill="none" stroke-linecap="round" stroke-linejoin="round"/><path d="M19.3 122.9 L19.0 163.0 L43.7 158.0" stroke="#ff0000" stroke-width="4.4" fill="none" stroke-linecap="butt" stroke-linejoin="miter"/></svg>
</body></html>
